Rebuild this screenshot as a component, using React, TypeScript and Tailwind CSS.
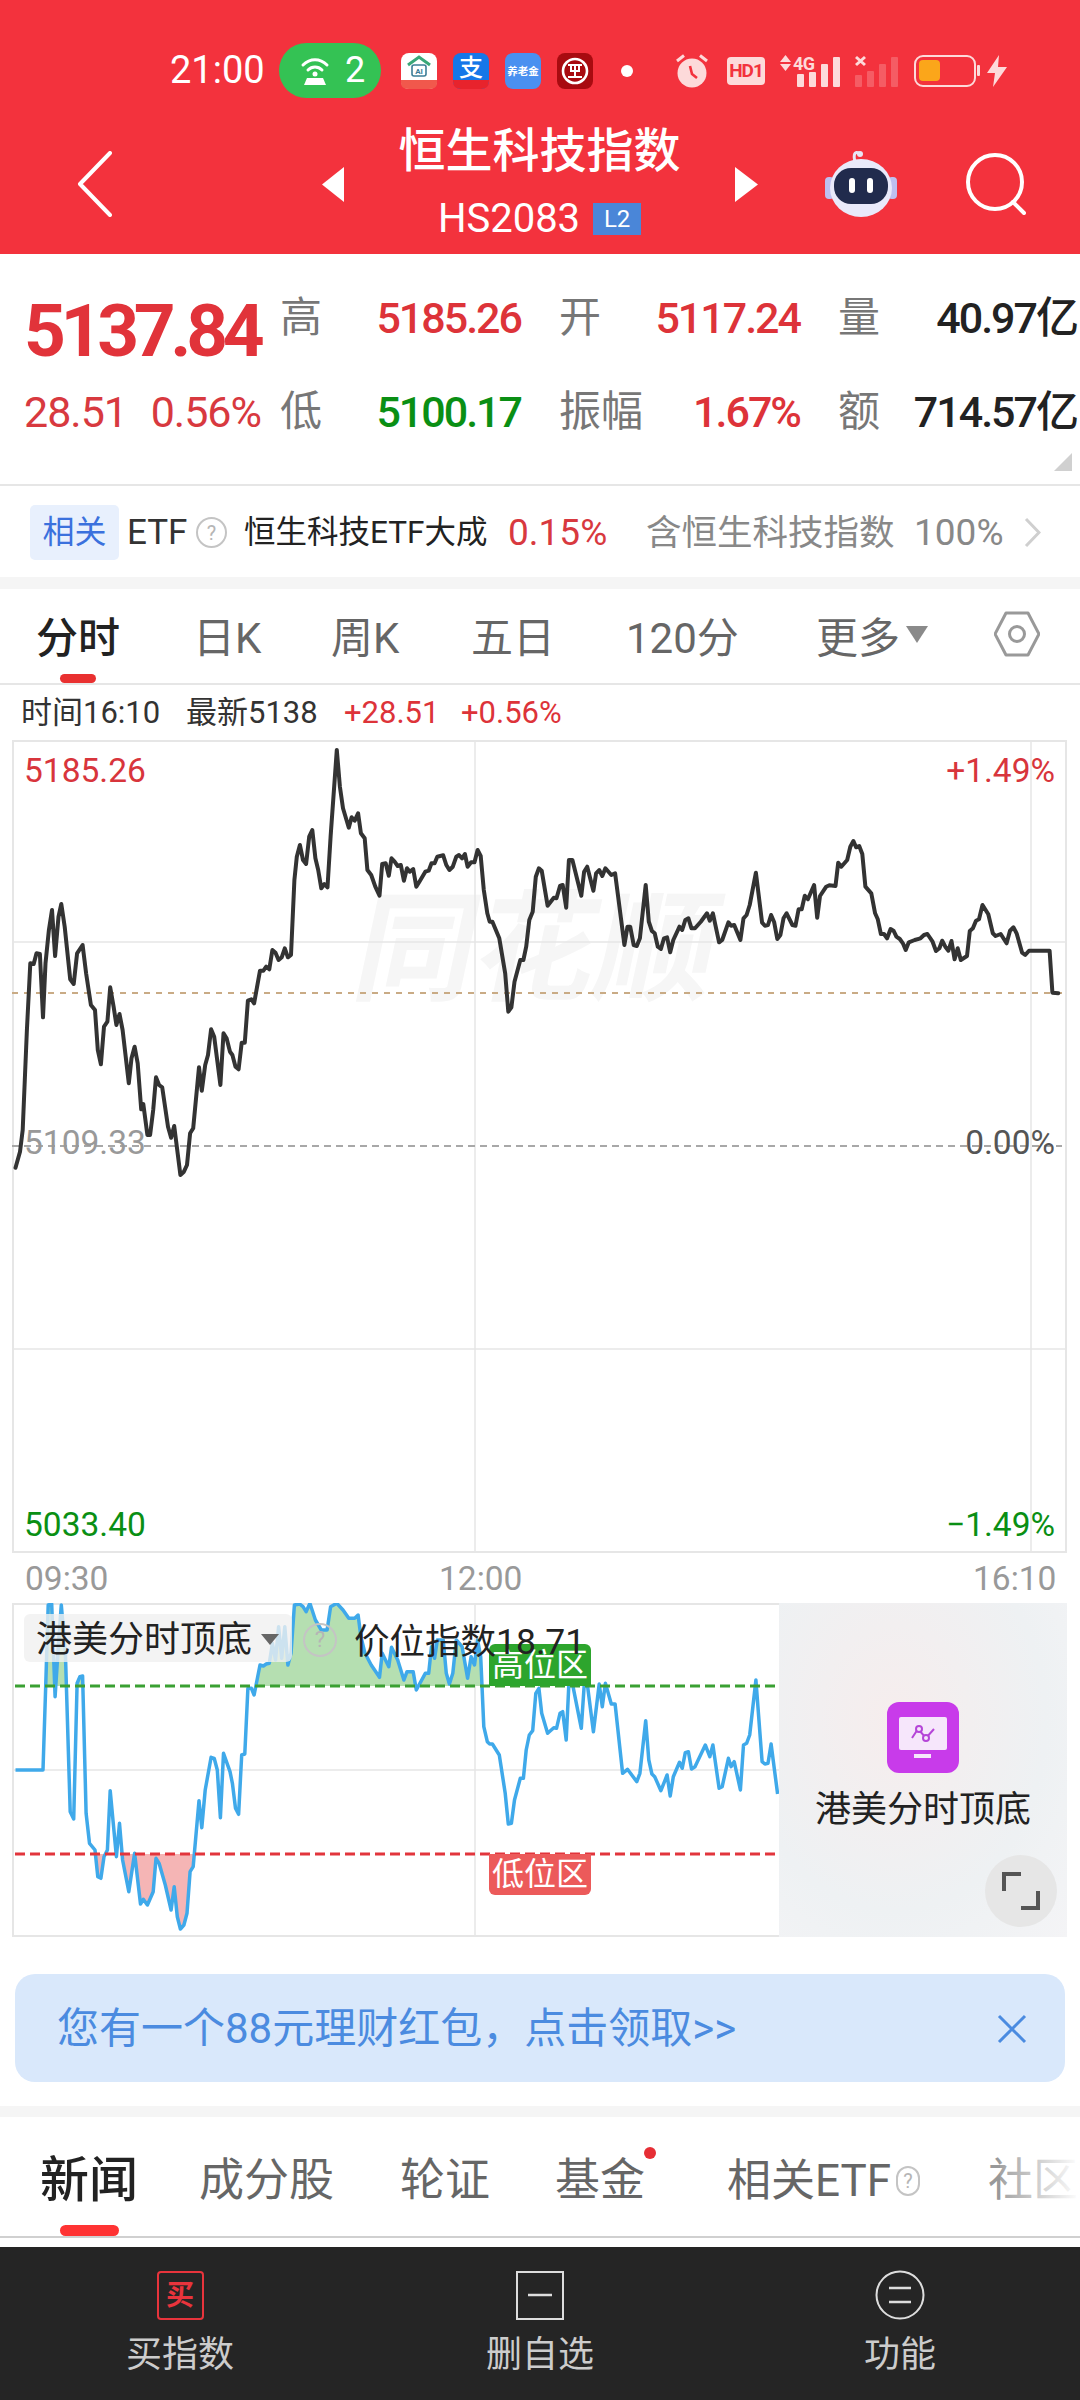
import React from "react";

const L: number[][] = [[45,1313],[58,1265],[66,1200],[72,1050],[78,900],[88,700],[98,702],[106,670],[116,672],[125,862],[132,700],[142,600],[151,540],[160,678],[170,560],[178,522],[188,590],[204,748],[214,762],[224,670],[240,645],[250,730],[264,825],[276,840],[284,960],[293,1003],[302,890],[312,875],[320,772],[330,830],[338,885],[347,852],[356,900],[374,1060],[382,985],[391,950],[400,1000],[410,1138],[416,1122],[428,1215],[436,1215],[445,1140],[453,1042],[462,1065],[471,1072],[488,1190],[497,1223],[506,1188],[524,1335],[534,1325],[543,1305],[552,1210],[561,1195],[578,1012],[586,1082],[596,1005],[604,975],[613,898],[622,920],[640,1065],[649,910],[658,925],[668,965],[675,975],[684,1010],[693,1018],[702,938],[711,938],[720,812],[730,808],[738,820],[755,722],[765,722],[773,710],[782,718],[791,660],[800,668],[809,690],[818,682],[827,655],[836,682],[845,675],[855,450],[862,380],[871,345],[880,390],[889,402],[898,320],[907,300],[916,385],[924,420],[933,475],[942,462],[951,472],[960,320],[978,60],[987,170],[996,235],[1013,293],[1021,262],[1030,272],[1040,250],[1048,310],[1059,325],[1067,420],[1078,435],[1090,470],[1102,497],[1110,402],[1120,400],[1129,437],[1137,385],[1146,395],[1155,408],[1164,405],[1173,452],[1182,415],[1190,425],[1200,417],[1209,470],[1218,455],[1235,425],[1245,422],[1253,400],[1262,400],[1270,380],[1287,376],[1296,405],[1305,420],[1315,410],[1325,380],[1333,375],[1342,385],[1350,372],[1358,410],[1368,397],[1378,397],[1387,360],[1396,378],[1405,480],[1415,550],[1422,575],[1430,575],[1450,625],[1467,730],[1476,845],[1485,832],[1494,755],[1511,690],[1520,690],[1528,650],[1537,570],[1547,545],[1556,440],[1565,415]];
const R: number[][] = [[5,422],[22,527],[40,503],[48,505],[58,468],[66,465],[76,533],[84,390],[94,390],[120,497],[128,425],[137,410],[155,482],[163,430],[172,420],[181,438],[190,415],[207,435],[218,430],[245,645],[254,590],[262,590],[272,645],[281,648],[290,625],[307,465],[316,575],[325,603],[333,610],[342,650],[351,657],[360,625],[369,622],[378,667],[387,630],[405,590],[413,600],[422,570],[431,565],[440,595],[450,595],[467,575],[485,550],[493,572],[502,550],[520,637],[529,630],[547,577],[555,587],[564,585],[582,630],[591,565],[600,555],[609,525],[627,428],[645,578],[653,587],[662,585],[671,555],[680,577],[689,627],[698,615],[707,565],[716,550],[733,585],[742,587],[751,538],[760,538],[769,497],[778,508],[796,465],[805,563],[813,498],[831,470],[840,466],[858,468],[866,398],[875,410],[892,390],[901,350],[910,333],[918,352],[927,348],[936,372],[945,470],[962,490],[973,550],[981,568],[990,612],[999,612],[1008,625],[1018,597],[1027,603],[1035,620],[1045,627],[1054,640],[1062,660],[1071,637],[1088,630],[1105,625],[1115,615],[1125,612],[1140,635],[1150,663],[1160,655],[1168,632],[1177,650],[1186,662],[1195,633],[1204,688],[1213,655],[1222,690],[1240,678],[1248,603],[1257,595],[1266,572],[1275,568],[1285,525],[1302,553],[1315,610],[1323,618],[1338,612],[1355,640],[1365,602],[1375,592],[1384,610],[1400,668],[1409,675],[1420,662],[1480,662],[1488,788],[1505,790]];
const BL: number[][] = [[45,630],[125,630],[133,370],[140,135],[150,132],[160,410],[170,250],[178,135],[190,280],[204,755],[214,777],[224,370],[232,350],[240,348],[250,760],[260,850],[276,870],[284,950],[293,955],[302,890],[312,870],[320,692],[338,890],[347,790],[356,900],[374,995],[391,880],[408,1032],[416,1018],[428,1035],[445,995],[453,895],[462,910],[480,975],[497,1050],[506,980],[515,1070],[524,1107],[534,1095],[543,1060],[552,935],[561,920],[578,722],[586,803],[596,690],[613,592],[622,595],[631,630],[640,773],[649,580],[668,635],[675,670],[684,745],[693,763],[702,585],[711,582],[720,385],[730,385],[738,405],[755,315],[765,318],[773,312],[782,310],[791,250],[800,300],[809,200],[818,295],[827,200],[836,315],[845,280],[855,135],[870,132],[880,140],[889,155],[900,130],[916,180],[933,210],[950,210],[960,140],[978,130],[996,150],[1013,175],[1030,175],[1040,165],[1048,230],[1060,280],[1078,315],[1102,352],[1110,280],[1129,320],[1137,262],[1155,300],[1173,360],[1182,335],[1200,335],[1209,390],[1235,340],[1245,340],[1253,260],[1262,295],[1270,240],[1287,240],[1296,340],[1305,372],[1315,340],[1325,240],[1342,260],[1358,355],[1368,290],[1378,315],[1387,240],[1396,290],[1405,500],[1415,545],[1422,552],[1430,552],[1450,585],[1467,700],[1476,792],[1485,790],[1494,720],[1511,655],[1520,655],[1528,570],[1537,525],[1547,512],[1556,400],[1565,385]];
const BR: number[][] = [[5,460],[22,520],[40,503],[48,505],[58,460],[66,455],[76,540],[84,370],[94,370],[120,505],[128,380],[137,370],[155,515],[172,372],[181,440],[190,370],[207,432],[218,432],[240,640],[254,628],[281,665],[290,640],[307,482],[316,600],[325,642],[333,650],[351,692],[369,645],[378,708],[387,650],[405,607],[413,625],[422,578],[431,575],[440,627],[450,620],[480,555],[493,590],[502,555],[520,685],[529,680],[547,595],[555,620],[564,605],[582,690],[591,555],[600,550],[609,525],[627,360],[645,605],[653,612],[662,610],[671,552],[690,702]];

const k = 2.904;
const mainPts = [
  ...L.map(([x, y]) => `${(x / k).toFixed(1)},${(y / 3 - 10).toFixed(1)}`),
  ...R.map(([x, y]) => `${(540 + x / k).toFixed(1)},${(y / 3 - 10).toFixed(1)}`),
].join(" ");
const subPts = [
  ...BL.map(([x, y]) => `${(x / k).toFixed(1)},${(y / 3 - 43).toFixed(1)}`),
  ...BR.map(([x, y]) => `${(540 + x / k).toFixed(1)},${(y / 3 - 43).toFixed(1)}`),
].join(" ");

function Pair({ w, label, value, color }: { w: string; label: string; value: string; color: string }) {
  return (
    <div className={`flex items-center justify-between ${w}`}>
      <span className="text-[42px] leading-[50px] text-[#777777]">{label}</span>
      <span className={`text-[43px] leading-[50px] font-medium tracking-[-2px] whitespace-nowrap ${color}`}>{value}</span>
    </div>
  );
}

function Help({ cls }: { cls: string }) {
  return (
    <span className={`flex items-center justify-center rounded-full border-2 border-[#c4c4c4] text-[#b5b5b5] ${cls}`}>?</span>
  );
}

function StatusBar() {
  return (
    <div className="flex h-[55px] items-center pl-[170px]">
      <span className="w-[95px] text-[38px] leading-[55px] text-white">21:00</span>
      <div className="ml-[14px] flex h-[55px] w-[102px] items-center rounded-full bg-[#34c254] pl-[21px]">
        <svg width="30" height="30" viewBox="0 0 30 30" fill="none" className="block">
          <path d="M3 9C10 2 20 2 27 9" stroke="#fff" strokeWidth="3" strokeLinecap="round" />
          <path d="M8 14C12 10 18 10 22 14" stroke="#fff" strokeWidth="3" strokeLinecap="round" />
          <circle cx="15" cy="18" r="2.5" fill="#fff" />
          <path d="M4 29L7 22H23L26 29Z" fill="#fff" />
        </svg>
        <span className="ml-[15px] text-[36px] leading-[55px] text-white">2</span>
      </div>
      <svg width="36" height="36" viewBox="0 0 36 36" className="ml-[20px] block">
        <rect width="36" height="36" rx="8" fill="#fff" />
        <path d="M0 27H36V30Q36 36 28 36H8Q0 36 0 30Z" fill="#f1584c" />
        <path d="M7 12L18 4L29 12" fill="none" stroke="#3aa778" strokeWidth="3" />
        <rect x="11" y="12" width="14" height="11" rx="2" fill="none" stroke="#3d7d96" strokeWidth="1.6" />
        <text x="18" y="21" fontSize="8" textAnchor="middle" fill="#3d7d96" fontWeight="700">AI</text>
      </svg>
      <svg width="36" height="36" viewBox="0 0 36 36" className="ml-[16px] block">
        <rect width="36" height="36" rx="8" fill="#1677e8" />
        <path d="M0 27H36V28Q36 36 28 36H8Q0 36 0 28Z" fill="#e8232c" />
        <text x="18" y="23" fontSize="24" textAnchor="middle" fill="#fff" fontWeight="500">支</text>
      </svg>
      <svg width="36" height="36" viewBox="0 0 36 36" className="ml-[16px] block">
        <rect width="36" height="36" rx="8" fill="#4a90f0" />
        <text x="18" y="22" fontSize="10.500" textAnchor="middle" fill="#fff" fontWeight="700">养老金</text>
      </svg>
      <svg width="36" height="36" viewBox="0 0 36 36" className="ml-[16px] block">
        <rect width="36" height="36" rx="8" fill="#a80b10" />
        <circle cx="18" cy="18" r="12" fill="none" stroke="#fff" strokeWidth="2.6" />
        <path d="M11 12H25M11 24H25M18 12V24M13 18H23M14 12V18M22 12V18" stroke="#fff" strokeWidth="2" fill="none" />
      </svg>
      <span className="ml-[28px] h-[12px] w-[12px] rounded-full bg-white" />
      <svg width="32" height="34" viewBox="0 0 32 34" className="ml-[43px] block">
        <circle cx="16" cy="19" r="14.5" fill="#fddada" />
        <path d="M1 7L8 1.5M31 7L24 1.5" stroke="#fddada" strokeWidth="3" />
        <path d="M14 12L16 20L21 24" stroke="#f3323d" strokeWidth="2.6" fill="none" />
      </svg>
      <div className="ml-[19px] flex h-[28px] w-[38px] items-center justify-center rounded-[4px] bg-[#fddada] text-[19px] font-bold leading-[28px] tracking-[-1px] text-[#f3323d]">HD1</div>
      <svg width="60" height="32" viewBox="0 0 60 32" className="ml-[15px] block">
        <path d="M0 7L5.500 0L11 7ZM0 9L5.500 16L11 9Z" fill="#fddada" />
        <text x="13" y="15" fontSize="18" fontWeight="700" letterSpacing="-0.500" fill="#fddada">4G</text>
        <rect x="17" y="19" width="7" height="13" rx="1" fill="#fddada" />
        <rect x="29" y="17" width="7" height="15" rx="1" fill="#fddada" />
        <rect x="41" y="9" width="7" height="23" rx="1" fill="#fddada" />
        <rect x="53" y="2" width="7" height="30" rx="1" fill="#fddada" />
      </svg>
      <svg width="43" height="32" viewBox="0 0 43 32" className="ml-[15px] block">
        <path d="M1 2L10 10M10 2L1 10" stroke="#fddada" strokeWidth="3" />
        <g fill="#fddada" opacity="0.25">
          <rect x="0" y="20" width="7" height="12" rx="1" />
          <rect x="12" y="16" width="7" height="16" rx="1" />
          <rect x="24" y="9" width="7" height="23" rx="1" />
          <rect x="36" y="2" width="7" height="30" rx="1" />
        </g>
      </svg>
      <svg width="67" height="32" viewBox="0 0 67 32" className="ml-[16px] block">
        <rect x="1" y="1" width="60" height="30" rx="8" fill="none" stroke="#fddada" strokeWidth="2" />
        <rect x="5" y="5" width="21" height="21" rx="4" fill="#fba61a" />
        <rect x="63" y="10" width="3" height="11" rx="1" fill="#fddada" />
      </svg>
      <svg width="20" height="32" viewBox="0 0 20 32" className="ml-[6px] block">
        <path d="M12 0L0 18H8L6 32L20 12H11Z" fill="#fddada" />
      </svg>
    </div>
  );
}

function Nav() {
  return (
    <div className="flex h-[156px] items-center pt-[16px]">
      <svg width="35" height="66" viewBox="0 0 35 66" className="ml-[77px] block">
        <path d="M33 2L3 33L33 64" fill="none" stroke="#fff" strokeWidth="4" strokeLinecap="round" strokeLinejoin="round" />
      </svg>
      <svg width="22" height="35" viewBox="0 0 22 35" className="ml-[210px] block">
        <path d="M22 0V35L0 17.500Z" fill="#fff" />
      </svg>
      <div className="flex w-[391px] flex-col items-center">
        <div className="h-[66px] text-[47px] font-medium leading-[66px] text-white">恒生科技指数</div>
        <div className="flex h-[66px] items-center pt-[3px]">
          <span className="text-[40px] leading-[60px] text-white">HS2083</span>
          <span className="ml-[13px] flex h-[32px] w-[48px] items-center justify-center bg-[#4a86d8] text-[24px] leading-[32px] text-white">L2</span>
        </div>
      </div>
      <svg width="23" height="35" viewBox="0 0 23 35" className="block">
        <path d="M0 0V35L23 17.500Z" fill="#fff" />
      </svg>
      <svg width="72" height="68" viewBox="0 0 72 68" className="ml-[67px] block">
        <path d="M30 12C28 4 30 1 34 3" fill="none" stroke="#e8e6f5" strokeWidth="3" />
        <circle cx="35" cy="4" r="3" fill="#e8e6f5" />
        <rect x="0" y="27" width="9" height="22" rx="4" fill="#bdbff0" />
        <rect x="63" y="27" width="9" height="22" rx="4" fill="#bdbff0" />
        <ellipse cx="36" cy="38" rx="31" ry="29" fill="#e9e9fa" />
        <rect x="9" y="18" width="54" height="36" rx="17" fill="#212b4d" />
        <rect x="24" y="28" width="6" height="15" rx="3" fill="#fff" />
        <rect x="42" y="28" width="6" height="15" rx="3" fill="#fff" />
      </svg>
      <svg width="60" height="62" viewBox="0 0 60 62" className="ml-[69px] block">
        <circle cx="29" cy="29" r="27" fill="none" stroke="#fff" strokeWidth="4" />
        <path d="M47 49L58 60" stroke="#fff" strokeWidth="4" strokeLinecap="round" />
      </svg>
    </div>
  );
}

function Quote() {
  return (
    <div className="relative flex h-[232px] border-b-2 border-[#e6e6e6] pt-[17px]">
      <div className="w-[280px] pl-[24px]">
        <div className="flex h-[94px] items-center pt-[26px] text-[73px] font-bold leading-[68px] tracking-[-5.3px] text-[#e1333a]">5137.84</div>
        <div className="flex h-[94px] w-[237px] items-center justify-between text-[43px] leading-[50px] tracking-[-1px] text-[#d8393f]">
          <span>28.51</span>
          <span>0.56%</span>
        </div>
      </div>
      <div className="flex flex-col">
        <div className="flex h-[94px] items-center gap-[38px]">
          <Pair w="w-[241px]" label="高" value="5185.26" color="text-[#dd3339]" />
          <Pair w="w-[241px]" label="开" value="5117.24" color="text-[#dd3339]" />
          <Pair w="w-[239px]" label="量" value="40.97亿" color="text-[#222222]" />
        </div>
        <div className="flex h-[94px] items-center gap-[38px]">
          <Pair w="w-[241px]" label="低" value="5100.17" color="text-[#0a8f14]" />
          <Pair w="w-[241px]" label="振幅" value="1.67%" color="text-[#dd3339]" />
          <Pair w="w-[239px]" label="额" value="714.57亿" color="text-[#222222]" />
        </div>
      </div>
      <svg width="18" height="18" viewBox="0 0 18 18" className="absolute left-[1054px] top-[199px] block">
        <path d="M18 0V18H0Z" fill="#d0d0d0" />
      </svg>
    </div>
  );
}

function Related() {
  return (
    <div className="flex h-[91px] items-center whitespace-nowrap pt-[2px]">
      <div className="ml-[30px] flex h-[55px] w-[89px] items-center justify-center rounded-[5px] bg-[#e8f0fd] text-[32px] leading-[55px] text-[#3b71dd]">相关</div>
      <span className="ml-[8px] w-[59px] text-[35px] leading-[50px] text-[#333333]">ETF</span>
      <Help cls="ml-[10px] h-[31px] w-[31px] text-[20px] leading-[28px]" />
      <span className="ml-[17px] w-[244px] text-[31.500px] leading-[50px] text-[#222222]">恒生科技ETF大成</span>
      <span className="ml-[20px] w-[99px] text-[37px] leading-[50px] text-[#d8393f]">0.15%</span>
      <span className="ml-[39px] w-[249px] text-[35.500px] leading-[50px] text-[#888888]">含恒生科技指数</span>
      <span className="ml-[19px] w-[89px] text-[37px] leading-[50px] text-[#888888]">100%</span>
      <svg width="17" height="31" viewBox="0 0 17 31" className="ml-[21px] block">
        <path d="M2 2L15 15.500L2 29" fill="none" stroke="#cfcfcf" strokeWidth="3" />
      </svg>
    </div>
  );
}

function KTabs() {
  return (
    <div className="relative flex h-[96px] items-center whitespace-nowrap border-b-2 border-[#e6e6e6] pt-[5px] text-[42px] leading-[60px] text-[#666666]">
      <span className="ml-[36px] w-[84px] font-medium text-[#222222]">分时</span>
      <span className="ml-[73px] w-[66px]">日K</span>
      <span className="ml-[72px] w-[68px]">周K</span>
      <span className="ml-[72px] w-[80px]">五日</span>
      <span className="ml-[75px] w-[113px]">120分</span>
      <span className="ml-[77px] w-[84px]">更多</span>
      <svg width="22" height="17" viewBox="0 0 22 17" className="ml-[6px] block -mt-[9px]">
        <path d="M0 0H22L11 17Z" fill="#8a8a8a" />
      </svg>
      <svg width="46" height="46" viewBox="0 0 46 46" className="ml-[66px] block -mt-[9px]">
        <path d="M12 2H34L45 23L34 44H12L1 23Z" fill="none" stroke="#999999" strokeWidth="3" strokeLinejoin="round" />
        <circle cx="23" cy="23" r="7.500" fill="none" stroke="#999999" strokeWidth="3" />
      </svg>
      <span className="absolute bottom-0 left-[60px] h-[9px] w-[36px] rounded-full bg-[#e93030]" />
    </div>
  );
}

function InfoRow() {
  return (
    <div className="flex h-[55px] items-center whitespace-nowrap text-[31px] leading-[40px]">
      <span className="ml-[21px] w-[141px] text-[#333333]">时间16:10</span>
      <span className="ml-[24px] w-[135px] text-[#333333]">最新5138</span>
      <span className="ml-[23px] w-[92px] text-[#dd3339]">+28.51</span>
      <span className="ml-[25px] text-[#dd3339]">+0.56%</span>
    </div>
  );
}

function MainChart() {
  const label = "absolute text-[33.500px] leading-[40px]";
  return (
    <div className="relative h-[813px] w-[1080px]">
      <span className="absolute left-[358px] top-[135px] -skew-x-12 whitespace-nowrap text-[120px] font-bold leading-[150px] text-[#f6f6f6]">同花顺</span>
      <svg width="1080" height="813" viewBox="0 0 1080 813" className="absolute left-0 top-0 block">
        <g stroke="#e6e6e6" strokeWidth="2" fill="none">
          <path d="M12 1H1067M12 812H1067M13 0V813M1066 0V813" />
          <path d="M12 202H1067M12 609H1067M475 0V813M1031 0V813" strokeWidth="1.500" />
        </g>
        <path d="M12 253H1062" stroke="#c9ab85" strokeWidth="2" strokeDasharray="6 6" />
        <path d="M12 406H1062" stroke="#a8a8a8" strokeWidth="2" strokeDasharray="7 5" />
        <polyline points={mainPts} fill="none" stroke="#333333" strokeWidth="4" strokeLinejoin="round" strokeLinecap="round" />
      </svg>
      <span className={`${label} left-[24px] top-[11px] text-[#d8353c]`}>5185.26</span>
      <span className={`${label} right-[25px] top-[11px] text-[#d8353c]`}>+1.49%</span>
      <span className={`${label} left-[24px] top-[383px] text-[#999999]`}>5109.33</span>
      <span className={`${label} right-[25px] top-[383px] text-[#555555]`}>0.00%</span>
      <span className={`${label} left-[24px] top-[765px] text-[#0a8f14]`}>5033.40</span>
      <span className={`${label} right-[25px] top-[765px] text-[#0a8f14]`}>−1.49%</span>
    </div>
  );
}

function SubChart() {
  return (
    <div className="relative flex h-[334px] w-[1080px]">
      <svg width="779" height="334" viewBox="0 0 779 334" className="block shrink-0">
        <defs>
          <clipPath id="greenClip"><rect x="0" y="0" width="482" height="83" /></clipPath>
          <clipPath id="redClip"><rect x="90" y="251" width="110" height="83" /></clipPath>
        </defs>
        <g stroke="#e6e6e6" fill="none" strokeWidth="2">
          <path d="M12 1H779M12 333H779M13 0V334" />
          <path d="M12 167H779M475 0V334" strokeWidth="1.500" />
        </g>
        <polygon points={`${subPts} 778,334 15,334`} fill="#b5dfb1" clipPath="url(#greenClip)" />
        <polygon points={`${subPts} 778,0 15,0`} fill="#f5b5b5" clipPath="url(#redClip)" />
        <polyline points={subPts} fill="none" stroke="#3fa9ea" strokeWidth="3.500" strokeLinejoin="round" />
        <path d="M15 83H777" stroke="#3aa032" strokeWidth="3" strokeDasharray="10 5" />
        <path d="M15 251H777" stroke="#e2353c" strokeWidth="3" strokeDasharray="10 5" />
      </svg>
      <div className="relative flex h-[334px] w-[288px] flex-col items-center bg-[radial-gradient(ellipse_at_40%_35%,#f6eded,#eef1f3_62%,#f4f4f6)] pt-[99px]">
        <div className="flex h-[71px] w-[72px] items-center justify-center rounded-[12px] bg-[#c83bea]">
          <svg width="48" height="42" viewBox="0 0 48 42" className="block">
            <rect width="48" height="33" rx="2" fill="#f6e6fb" />
            <rect x="15" y="37" width="17" height="4" fill="#f6e6fb" />
            <path d="M13 21L19 12L27 21L35 12" fill="none" stroke="#b545d8" strokeWidth="2" />
            <circle cx="20" cy="12" r="3" fill="#f6e6fb" stroke="#b545d8" strokeWidth="2" />
            <circle cx="27" cy="21" r="3" fill="#f6e6fb" stroke="#b545d8" strokeWidth="2" />
          </svg>
        </div>
        <div className="mt-[13px] text-[36px] leading-[48px] text-[#222222]">港美分时顶底</div>
        <div className="absolute left-[206px] top-[252px] flex h-[72px] w-[72px] items-center justify-center rounded-full bg-[#e6e6e6]">
          <svg width="38" height="38" viewBox="0 0 38 38" className="block">
            <path d="M2 19V2H19M36 19V36H19" fill="none" stroke="#555555" strokeWidth="4" />
          </svg>
        </div>
      </div>
      <div className="absolute left-[24px] top-[11px] flex h-[48px] w-[268px] items-center rounded-[6px] bg-[#f0f0f0]/80 pl-[12px] pt-[3px]">
        <span className="w-[216px] whitespace-nowrap text-[36px] leading-[48px] text-[#222222]">港美分时顶底</span>
        <svg width="18" height="11" viewBox="0 0 18 11" className="ml-[9px] block">
          <path d="M0 0H18L9 11Z" fill="#666666" />
        </svg>
      </div>
      <Help cls="absolute left-[303px] top-[20px] h-[34px] w-[34px] text-[22px] leading-[30px]" />
      <span className="absolute left-[489px] top-[41px] flex h-[42px] w-[102px] items-center justify-center rounded-t-[6px] bg-[#2da52d] text-[32px] leading-[42px] text-white">高位区</span>
      <span className="absolute left-[489px] top-[251px] flex h-[41px] w-[102px] items-center justify-center rounded-b-[6px] bg-[#ec5a5a] text-[32px] leading-[41px] text-white">低位区</span>
      <span className="absolute left-[354px] top-[15px] whitespace-nowrap text-[35.500px] leading-[48px] text-[#222222]">价位指数18.71</span>
    </div>
  );
}

function Promo() {
  return (
    <div className="mx-[15px] mt-[37px] flex h-[108px] items-center rounded-[20px] bg-[#d9e8fb] pl-[42px] pt-[2px]">
      <span className="w-[940px] text-[42px] leading-[60px] text-[#4b8be0]">您有一个88元理财红包，点击领取&gt;&gt;</span>
      <svg width="30" height="30" viewBox="0 0 30 30" className="block">
        <path d="M2 2L28 28M28 2L2 28" stroke="#4b8be0" strokeWidth="3" />
      </svg>
    </div>
  );
}

function NewsTabs() {
  return (
    <div className="relative h-[121px] overflow-hidden border-b-2 border-[#d0d0d0]">
      <div className="flex h-[119px] items-center whitespace-nowrap pt-[9px] text-[45px] leading-[60px] text-[#666666]">
        <span className="ml-[40px] w-[98px] text-[49px] font-medium text-[#222222]">新闻</span>
        <span className="ml-[61px] w-[135px]">成分股</span>
        <span className="ml-[66px] w-[90px]">轮证</span>
        <span className="ml-[65px] w-[90px]">基金</span>
        <span className="ml-[82px] w-[164px] text-[44px]">相关ETF</span>
        <Help cls="ml-[5px] h-[30px] w-[30px] text-[20px] leading-[26px]" />
        <span className="ml-[68px] w-[120px] text-[#999999]">社区</span>
      </div>
      <span className="absolute left-[644px] top-[30px] h-[12px] w-[12px] rounded-full bg-[#e62e35]" />
      <span className="absolute bottom-0 left-[60px] h-[11px] w-[59px] rounded-full bg-[#f33]" />
      <span className="absolute right-0 top-0 h-[119px] w-[80px] bg-gradient-to-r from-white/10 to-white" />
    </div>
  );
}

function Footer() {
  const txt = "mt-[12px] text-[36px] leading-[46px] text-[#cccccc]";
  return (
    <div className="mt-[9px] flex h-[153px] bg-[#252525] pt-[24px]">
      <div className="flex w-[360px] flex-col items-center">
        <div className="flex h-[49px] w-[47px] items-center justify-center rounded-[4px] border-2 border-[#e8343c] text-[28px] font-bold leading-[40px] text-[#e8343c]">买</div>
        <span className={txt}>买指数</span>
      </div>
      <div className="flex w-[360px] flex-col items-center">
        <svg width="48" height="49" viewBox="0 0 48 49" className="block">
          <rect x="1" y="1" width="46" height="47" fill="none" stroke="#dddddd" strokeWidth="2" />
          <path d="M12 24H36" stroke="#dddddd" strokeWidth="2.500" />
        </svg>
        <span className={txt}>删自选</span>
      </div>
      <div className="flex w-[360px] flex-col items-center">
        <svg width="50" height="50" viewBox="0 0 50 50" className="block -mt-[1px]">
          <circle cx="25" cy="25" r="23.500" fill="none" stroke="#dddddd" strokeWidth="2" />
          <path d="M14 18H36M14 32H36" stroke="#dddddd" strokeWidth="2.500" />
        </svg>
        <span className={txt}>功能</span>
      </div>
    </div>
  );
}

export default function App() {
  return (
    <div className="h-[2400px] w-[1080px] overflow-hidden bg-white font-['Roboto','Noto_Sans_CJK_SC',sans-serif]">
      <div className="h-[254px] bg-[#f3323d] pt-[43px]">
        <StatusBar />
        <Nav />
      </div>
      <Quote />
      <Related />
      <div className="h-[12px] bg-[#f5f5f5]" />
      <KTabs />
      <InfoRow />
      <MainChart />
      <div className="flex h-[50px] items-center pl-[25px] pt-[2px] text-[33.500px] leading-[40px] text-[#999999]">
        <span className="w-[80px]">09:30</span>
        <span className="ml-[334px] w-[77px]">12:00</span>
        <span className="ml-[457px]">16:10</span>
      </div>
      <SubChart />
      <Promo />
      <div className="mt-[24px] h-[11px] bg-[#f5f5f5]" />
      <NewsTabs />
      <Footer />
    </div>
  );
}
